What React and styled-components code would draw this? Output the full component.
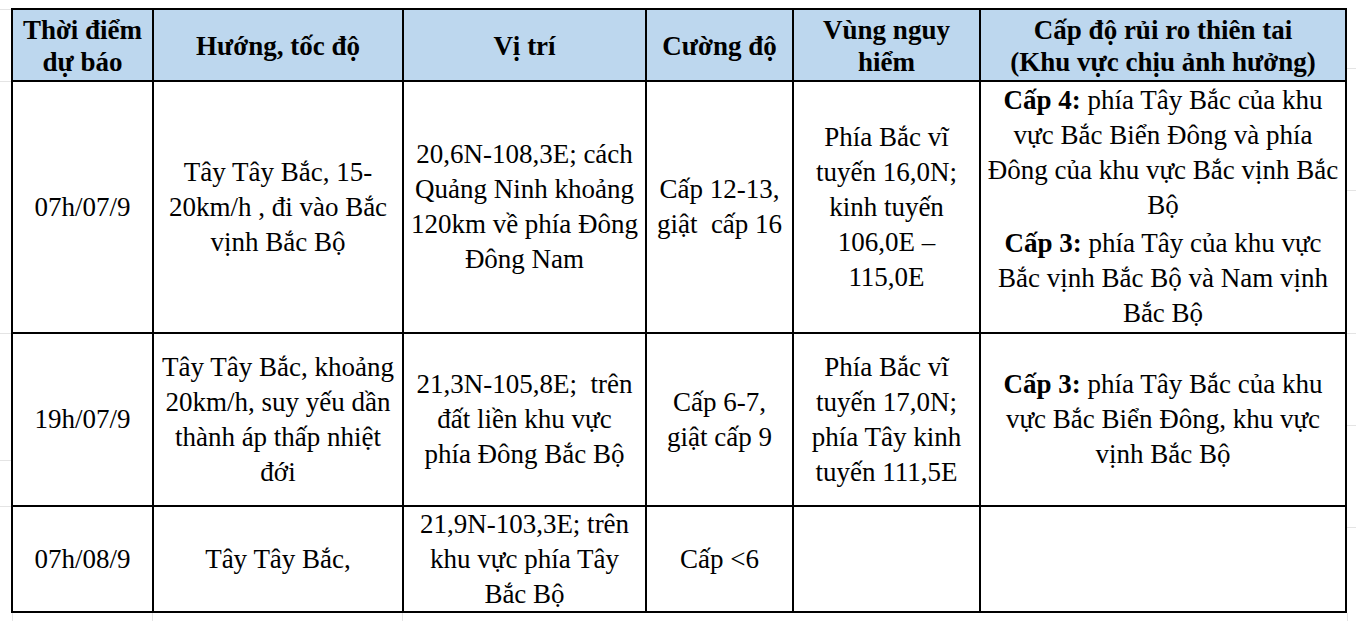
import React from "react";
import styled, { createGlobalStyle } from "styled-components";

const GlobalStyle = createGlobalStyle`
  html, body {
    margin: 0;
    padding: 0;
    background: #ffffff;
  }
  body {
    font-family: "Liberation Serif", "Times New Roman", "DejaVu Serif", serif;
    color: #000;
  }
`;

const Sheet = styled.div`
  width: 1356px;
  height: 621px;
  box-sizing: border-box;
  padding: 8px 0 0 11px;
  overflow: hidden;
  background-color: #fff;
  background-image:
    linear-gradient(#e4e4e4, #e4e4e4),
    linear-gradient(#e4e4e4, #e4e4e4),
    linear-gradient(#e4e4e4, #e4e4e4),
    linear-gradient(#e4e4e4, #e4e4e4),
    linear-gradient(#e4e4e4, #e4e4e4),
    linear-gradient(#e4e4e4, #e4e4e4),
    linear-gradient(#e4e4e4, #e4e4e4),
    linear-gradient(#e4e4e4, #e4e4e4),
    linear-gradient(#e4e4e4, #e4e4e4),
    linear-gradient(#e4e4e4, #e4e4e4),
    linear-gradient(#e4e4e4, #e4e4e4),
    linear-gradient(#e4e4e4, #e4e4e4),
    linear-gradient(#e4e4e4, #e4e4e4),
    linear-gradient(#e4e4e4, #e4e4e4);
  background-repeat: no-repeat;
  background-size:
    11px 1px, 11px 1px, 11px 1px, 11px 1px, 11px 1px,
    9px 1px, 9px 1px, 9px 1px, 9px 1px, 9px 1px,
    1px 8px, 1px 8px, 1px 8px, 1px 8px;
  background-position:
    0 9px, 0 81px, 0 333px, 0 460px, 0 506px,
    1347px 68px, 1347px 190px, 1347px 333px, 1347px 425px, 1347px 527px,
    12px 613px, 152px 613px, 402px 613px, 1347px 613px;
`;

const Table = styled.div`
  display: grid;
  width: max-content;
  grid-template-columns: 141px 250px 243px 147px 187px 366px;
  grid-template-rows: 72px 252px 173px 106px;
  border-top: 2px solid #000;
  border-left: 2px solid #000;
  background: #fff;
  font-family: "Liberation Serif", "Times New Roman", "DejaVu Serif", serif;
`;

const Cell = styled.div`
  box-sizing: border-box;
  border-right: 2px solid #000;
  border-bottom: 2px solid #000;
  display: flex;
  flex-direction: column;
  align-items: center;
  justify-content: center;
  text-align: center;
  font-size: 27px;
  line-height: 35px;
  color: #000;
  overflow: visible;
`;

const HeadCell = styled(Cell)`
  background: #bdd7ee;
  font-weight: bold;
  line-height: 32px;
  padding-top: 1px;
`;

const Line = styled.span`
  display: block;
  white-space: pre;
`;

const Para = styled.div`
  margin-top: ${(p) => (p.$gap ? "3px" : "0")};
`;

const Label = styled.b`
  font-weight: bold;
`;

const lines = (arr) => arr.map((t, i) => <Line key={i}>{t}</Line>);

const headers = [
  ["Thời điểm", "dự báo"],
  ["Hướng, tốc độ"],
  ["Vị trí"],
  ["Cường độ"],
  ["Vùng nguy", "hiểm"],
  ["Cấp độ rủi ro thiên tai", "(Khu vực chịu ảnh hưởng)"],
];

const rows = [
  [
    ["07h/07/9"],
    ["Tây Tây Bắc, 15-", "20km/h , đi vào Bắc", "vịnh Bắc Bộ"],
    ["20,6N-108,3E; cách", "Quảng Ninh khoảng", "120km về phía Đông", "Đông Nam"],
    ["Cấp 12-13,", "giật  cấp 16"],
    ["Phía Bắc vĩ", "tuyến 16,0N;", "kinh tuyến", "106,0E –", "115,0E"],
  ],
  [
    ["19h/07/9"],
    ["Tây Tây Bắc, khoảng", "20km/h, suy yếu dần", "thành áp thấp nhiệt", "đới"],
    ["21,3N-105,8E;  trên", "đất liền khu vực", "phía Đông Bắc Bộ"],
    ["Cấp 6-7,", "giật cấp 9"],
    ["Phía Bắc vĩ", "tuyến 17,0N;", "phía Tây kinh", "tuyến 111,5E"],
  ],
  [
    ["07h/08/9"],
    ["Tây Tây Bắc,"],
    ["21,9N-103,3E; trên", "khu vực phía Tây", "Bắc Bộ"],
    ["Cấp <6"],
    [],
  ],
];

const riskCells = [
  <>
    <Para>
      <Line>
        <Label>Cấp 4:</Label> phía Tây Bắc của khu
      </Line>
      <Line>vực Bắc Biển Đông và phía</Line>
      <Line>Đông của khu vực Bắc vịnh Bắc</Line>
      <Line>Bộ</Line>
    </Para>
    <Para $gap>
      <Line>
        <Label>Cấp 3:</Label> phía Tây của khu vực
      </Line>
      <Line>Bắc vịnh Bắc Bộ và Nam vịnh</Line>
      <Line>Bắc Bộ</Line>
    </Para>
  </>,
  <>
    <Line>
      <Label>Cấp 3:</Label> phía Tây Bắc của khu
    </Line>
    <Line>vực Bắc Biển Đông, khu vực</Line>
    <Line>vịnh Bắc Bộ</Line>
  </>,
  null,
];

export default function App() {
  return (
    <>
      <GlobalStyle />
      <Sheet>
        <Table>
          {headers.map((h, i) => (
            <HeadCell key={`h${i}`}>{lines(h)}</HeadCell>
          ))}
          {rows.map((row, r) => (
            <React.Fragment key={`r${r}`}>
              {row.map((c, i) => (
                <Cell key={`c${r}-${i}`}>{lines(c)}</Cell>
              ))}
              <Cell>{riskCells[r]}</Cell>
            </React.Fragment>
          ))}
        </Table>
      </Sheet>
    </>
  );
}
